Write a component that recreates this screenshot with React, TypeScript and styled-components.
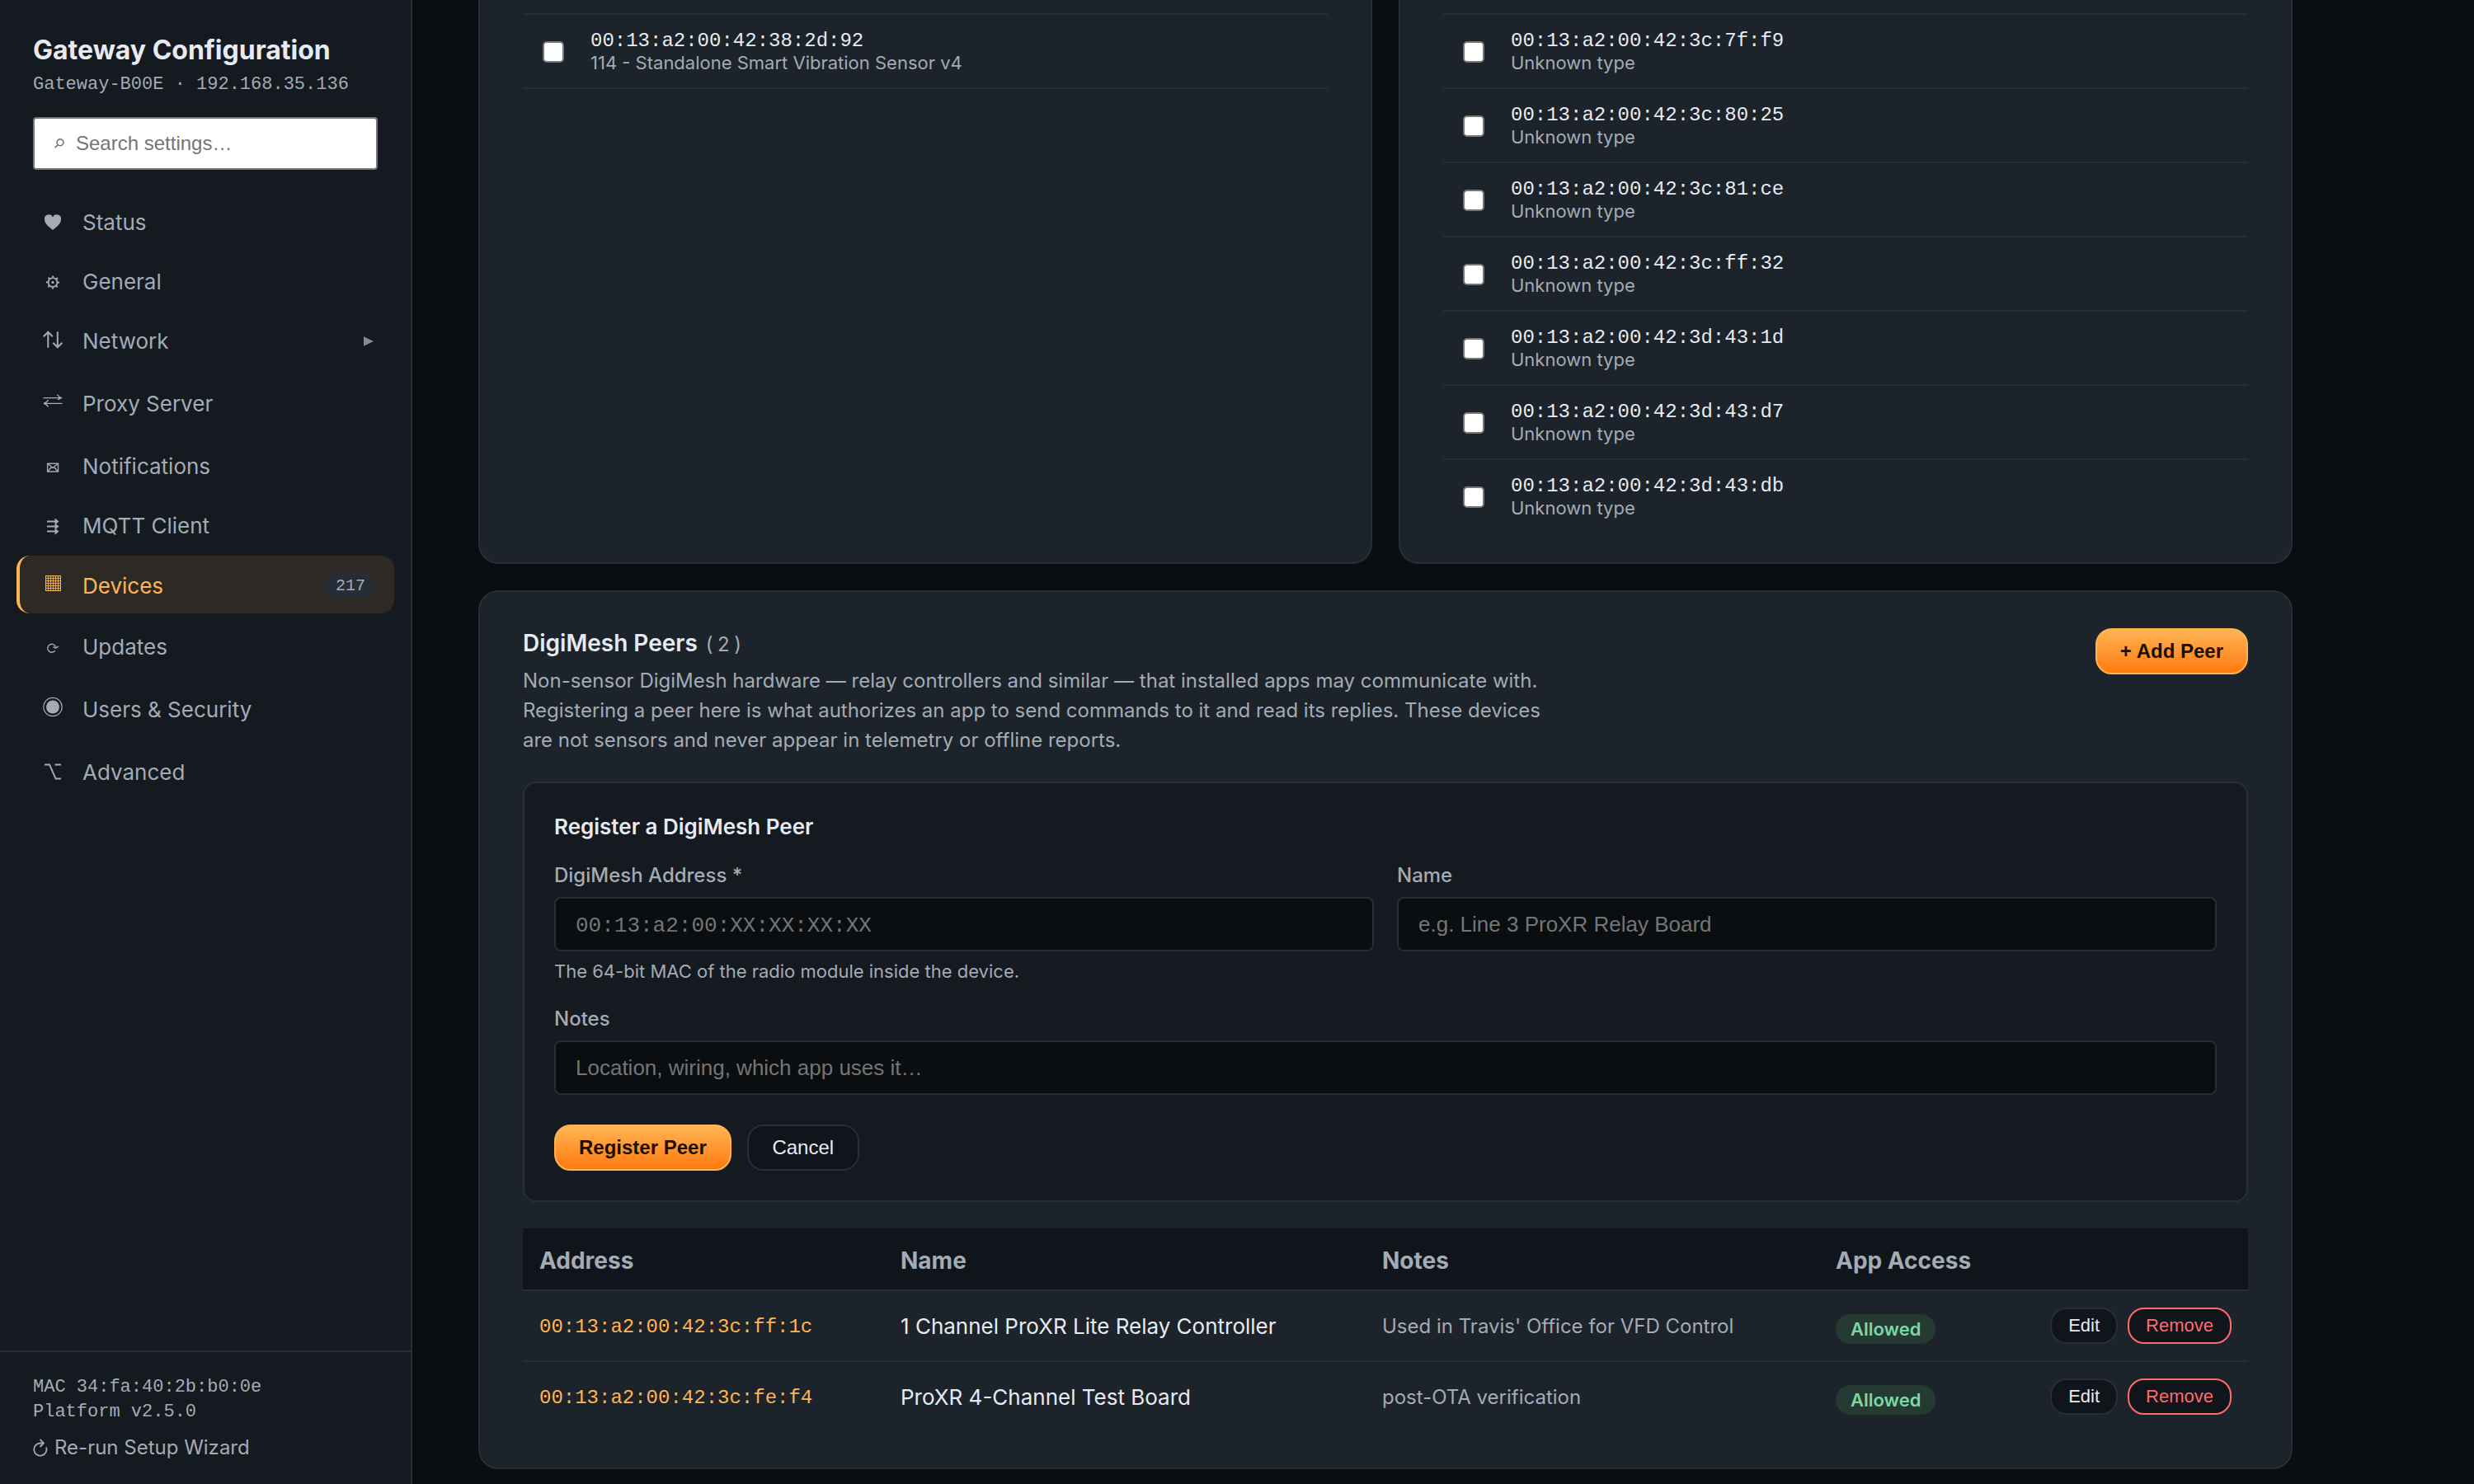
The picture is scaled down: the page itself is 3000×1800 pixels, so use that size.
import React from "react";
import styled, { createGlobalStyle, css } from "styled-components";

const sans = `Inter, "Liberation Sans", sans-serif`;
const arial = `"Liberation Sans", Arial, sans-serif`;
const mono = `"Liberation Mono", "Courier New", monospace`;

const c = {
  page: "#0a0e10",
  side: "#151920",
  card: "#1c232a",
  deep: "#10141b",
  line: "#262e36",
  text: "#e6eaf2",
  muted: "#a3abb5",
  accent: "#ffb454",
  danger: "#ff6b6b",
};

const Global = createGlobalStyle`
  * { box-sizing: border-box; }
  body { margin: 0; background: ${c.page}; color: ${c.text}; font-family: ${sans}; overflow: hidden; }
`;

const Page = styled.div`
  display: flex;
  width: 3000px;
  height: 1800px;
  overflow: hidden;
`;

const Sidebar = styled.aside`
  display: flex;
  flex-direction: column;
  width: 500px;
  height: 1800px;
  flex: none;
  background: ${c.side};
  border-right: 2px solid ${c.line};
`;

const SideHead = styled.header`
  padding: 41px 40px 0;
`;

const Title = styled.h1`
  margin: 0;
  font-size: 32px;
  line-height: 40px;
  font-weight: 700;
  white-space: nowrap;
`;

const SubTitle = styled.div`
  margin-top: 7px;
  font: 22px/30px ${mono};
  color: ${c.muted};
  white-space: nowrap;
`;

const Search = styled.label`
  display: flex;
  align-items: center;
  gap: 14px;
  height: 64px;
  margin-top: 24px;
  padding-left: 24px;
  background: #fff;
  border: 2px solid #767676;
  border-radius: 4px;
  color: #757575;
`;

const SearchInput = styled.input`
  flex: 1;
  min-width: 0;
  padding: 0;
  border: 0;
  outline: 0;
  background: none;
  font: 24px ${arial};
  &::placeholder { color: #757575; opacity: 1; }
`;

const Nav = styled.nav`
  display: flex;
  flex-direction: column;
  gap: 4px;
  padding: 28px 20px 0;
`;

const NavItem = styled.a<{ $h: number; $active?: boolean }>`
  display: flex;
  align-items: center;
  height: ${(p) => p.$h}px;
  padding: 0 24px 0 28px;
  border-left: 4px solid transparent;
  border-radius: 16px;
  color: ${c.muted};
  font-size: 26px;
  ${(p) =>
    p.$active &&
    css`
      color: ${c.accent};
      background: #2d2a25;
      border-left-color: ${c.accent};
    `}
`;

const NavIcon = styled.svg`
  width: 24px;
  height: 32px;
  flex: none;
  margin: 0 24px 2px 0;
  overflow: visible;
`;

const NavLabel = styled.span`
  flex: 1;
  padding-top: 3px;
  line-height: 36px;
`;

const Chevron = styled.svg`
  width: 12px;
  height: 12px;
  margin: 3px 1px 0 0;
  color: #858d97;
`;

const Count = styled.span`
  height: 28px;
  padding: 0 11px 0 13px;
  border-radius: 14px;
  background: #262d36;
  color: ${c.muted};
  font: 20px/31px ${mono};
`;

const SideFoot = styled.footer`
  height: 162px;
  margin-top: auto;
  padding: 28px 40px 0;
  border-top: 2px solid ${c.line};
  color: ${c.muted};
  font: 22px/30px ${mono};
`;

const Rerun = styled.a`
  display: flex;
  align-items: center;
  gap: 8px;
  margin-top: 10px;
  font: 24px/36px ${sans};
`;

const Main = styled.main`
  width: 2200px;
  margin-left: 80px;
`;

const Columns = styled.div`
  display: grid;
  grid-template-columns: 1fr 1fr;
  gap: 32px;
  height: 714px;
  margin-top: -30px;
`;

const Card = styled.section`
  background: ${c.card};
  border: 2px solid ${c.line};
  border-radius: 24px;
  padding: 44px 52px 34px;
`;

const DeviceRow = styled.label`
  display: flex;
  align-items: center;
  height: 90px;
  padding-left: 24px;
  border-top: 2px solid ${c.line};
`;

const DeviceList = styled.div<{ $closed?: boolean }>`
  border-bottom: ${(p) => (p.$closed ? `2px solid ${c.line}` : "0")};
`;

const Check = styled.input.attrs({ type: "checkbox" })`
  appearance: none;
  width: 26px;
  height: 26px;
  margin: 2px 32px 0 0;
  background: #fff;
  border: 2px solid #767676;
  border-radius: 5px;
`;

const Mac = styled.div`
  margin-bottom: -2px;
  padding-top: 2px;
  font: 24px/28px ${mono};
  color: ${c.text};
`;

const Kind = styled.div`
  font-size: 22px;
  line-height: 28px;
  color: ${c.muted};
`;

const PeersCard = styled(Card)`
  height: 1066px;
  margin-top: 32px;
`;

const PeersHead = styled.div`
  display: flex;
  justify-content: space-between;
  align-items: flex-start;
`;

const PeersTitle = styled.h2`
  margin: 0;
  font-size: 28px;
  line-height: 36px;
  font-weight: 600;
`;

const PeersCount = styled.span`
  margin-left: 10px;
  font-size: 24px;
  font-weight: 400;
  letter-spacing: 5.5px;
  color: ${c.muted};
`;

const Desc = styled.p`
  width: 1260px;
  margin: 8px 0 0;
  font-size: 24px;
  line-height: 36px;
  color: ${c.muted};
`;

const Button = styled.button<{ $kind?: "primary" | "danger"; $small?: boolean }>`
  height: ${(p) => (p.$small ? 44 : 56)}px;
  padding: 0 ${(p) => (p.$small ? 20 : 28)}px;
  border: 2px solid ${c.line};
  border-radius: 20px;
  background: ${c.deep};
  color: ${c.text};
  font: ${(p) => (p.$small ? 22 : 24)}px ${arial};
  white-space: nowrap;
  ${(p) =>
    p.$kind === "primary" &&
    css`
      background: linear-gradient(180deg, #ffb454, #ff7a0f);
      border-color: ${c.accent};
      color: #1a0f00;
      font-weight: 700;
    `}
  ${(p) =>
    p.$kind === "danger" &&
    css`
      border-color: ${c.danger};
      color: ${c.danger};
    `}
`;

const Form = styled.form`
  height: 510px;
  margin-top: 32px;
  padding: 35px 36px 36px;
  background: ${c.side};
  border: 2px solid ${c.line};
  border-radius: 16px;
`;

const FormTitle = styled.h3`
  margin: 0 0 23px;
  font-size: 26px;
  line-height: 36px;
  font-weight: 600;
`;

const FormGrid = styled.div`
  display: grid;
  grid-template-columns: 1fr 1fr;
  column-gap: 28px;
`;

const Field = styled.label`
  display: block;
`;

const FieldLabel = styled.div`
  margin-bottom: 8px;
  font-size: 24px;
  line-height: 36px;
  font-weight: 500;
  color: ${c.muted};
`;

const Input = styled.input<{ $mono?: boolean }>`
  display: block;
  width: 100%;
  height: 66px;
  padding: ${(p) => (p.$mono ? 3 : 0)}px 24px 0;
  background: ${c.page};
  border: 2px solid ${c.line};
  border-radius: 8px;
  outline: 0;
  font: 26px ${(p) => (p.$mono ? mono : arial)};
  &::placeholder { color: #757575; opacity: 1; }
`;

const Hint = styled.div`
  margin: 8px 0 24px;
  font-size: 22px;
  line-height: 32px;
  color: ${c.muted};
`;

const Actions = styled.div`
  display: flex;
  gap: 19px;
  margin-top: 36px;
`;

const CancelButton = styled(Button)`
  width: 136px;
`;

const Table = styled.div`
  margin-top: 32px;
`;

const columns = css`
  display: grid;
  grid-template-columns: 438px 584px 550px 1fr;
  align-items: center;
  padding: 0 20px;
`;

const HeadRow = styled.div`
  ${columns}
  height: 76px;
  padding-top: 3px;
  background: ${c.deep};
  border-bottom: 2px solid ${c.line};
  color: ${c.muted};
  font-size: 28px;
  font-weight: 700;
`;

const PeerRow = styled.div`
  ${columns}
  height: 86px;
  border-bottom: 2px solid ${c.line};
  &:last-child { border-bottom-color: transparent; }
`;

const Address = styled.span`
  padding-top: 4px;
  font: 24px/30px ${mono};
  color: ${c.accent};
`;

const Name = styled.span`
  font-size: 26px;
`;

const Notes = styled.span`
  font-size: 24px;
  color: ${c.muted};
`;

const Access = styled.div`
  display: flex;
  align-items: center;
  gap: 12px;
`;

const Allowed = styled.span`
  height: 36px;
  margin: 8px auto 0 0;
  padding: 0 18px;
  border-radius: 18px;
  background: #243a33;
  color: #7bd8a2;
  font-size: 22px;
  line-height: 36px;
  font-weight: 600;
`;

const line = { fill: "none", stroke: "currentColor", strokeWidth: 2 } as const;

const icons: Record<string, React.ReactNode> = {
  Status: <path fill="currentColor" d="M12 28C7 24 2 20 2 15.200A5.200 5.200 0 0 1 12 12.600 5.200 5.200 0 0 1 22 15.200C22 20 17 24 12 28Z" />,
  General: (
    <g {...line}>
      <circle cx="12" cy="19.500" r="5.400" strokeWidth="1.800" />
      <circle cx="12" cy="19.500" r="1.200" fill="currentColor" strokeWidth="1" />
      <circle cx="12" cy="19.500" r="7" strokeWidth="2" strokeDasharray="2.200 3.298" strokeDashoffset="1.100" />
    </g>
  ),
  Network: <path {...line} d="M6.300 26.800V8.200M.8 13.200 6.300 7.700 11.800 13.200M17.800 7.200V25.800M12.300 20.800 17.800 26.300 23.300 20.800" />,
  Proxy: <path {...line} strokeWidth="1.300" d="M.5 11.700H23M17.500 7.500C18.500 9.500 20 11 23 11.700 20.500 12.300 19 13 18.200 14M23.500 18.300H1M6.500 14C5.500 16 4 17.600 1 18.300 4 19 5.500 20.500 6.500 22.500" />,
  Notifications: <path {...line} strokeWidth="1.400" d="M5.600 15.200H18.500V25H5.600ZM5.600 15.200 12 20.600 18.500 15.200M5.600 25 10.500 19.500M18.500 25 13.500 19.500M9.500 20H14.500" />,
  MQTT: (
    <g fill="currentColor">
      <path d="M5 12.600H16V14.600H5ZM5 18.600H16V20.600H5ZM5 24.600H16V26.600H5Z" />
      <path d="M14.500 9.500 19.500 13.600 14.500 17.700ZM14.500 15.500 19.500 19.600 14.500 23.700ZM14.500 21.500 19.500 25.600 14.500 29.700Z" />
    </g>
  ),
  Devices: (
    <g {...line} strokeWidth="1">
      <rect x="3.500" y="6.500" width="18" height="18" fill="currentColor" fillOpacity=".12" />
      <path opacity=".8" d="M6.500 6.500V24.500M9.500 6.500V24.500M12.500 6.500V24.500M15.500 6.500V24.500M18.500 6.500V24.500M3.500 9.500H21.500M3.500 12.500H21.500M3.500 15.500H21.500M3.500 18.500H21.500M3.500 21.500H21.500" />
    </g>
  ),
  Updates: <path {...line} strokeWidth="1.400" d="M14.800 22.200A5 5 0 1 1 15.600 17.800M12.500 17.600 15.600 19.200 19 16.800" />,
  Users: (
    <g>
      <circle cx="12" cy="14.500" r="11.200" {...line} strokeWidth="1.200" />
      <circle cx="12" cy="14.500" r="8" fill="currentColor" />
    </g>
  ),
  Advanced: <path {...line} d="M2 8.400H8L15.600 25.600H22M14.500 8.400H22" />,
};

const nav = [
  { icon: "Status", label: "Status", h: 68 },
  { icon: "General", label: "General", h: 68 },
  { icon: "Network", label: "Network", h: 68, chevron: true },
  { icon: "Proxy", label: "Proxy Server", h: 76 },
  { icon: "Notifications", label: "Notifications", h: 68 },
  { icon: "MQTT", label: "MQTT Client", h: 68 },
  { icon: "Devices", label: "Devices", h: 70, count: 217 },
  { icon: "Updates", label: "Updates", h: 71 },
  { icon: "Users", label: "Users & Security", h: 73 },
  { icon: "Advanced", label: "Advanced", h: 71 },
];

const unknown = ["7f:f9", "80:25", "81:ce", "ff:32"].map((s) => `00:13:a2:00:42:3c:${s}`)
  .concat(["43:1d", "43:d7", "43:db"].map((s) => `00:13:a2:00:42:3d:${s}`));

const peers = [
  { mac: "00:13:a2:00:42:3c:ff:1c", name: "1 Channel ProXR Lite Relay Controller", notes: "Used in Travis' Office for VFD Control" },
  { mac: "00:13:a2:00:42:3c:fe:f4", name: "ProXR 4-Channel Test Board", notes: "post-OTA verification" },
];

function Device({ mac, kind }: { mac: string; kind: string }) {
  return (
    <DeviceRow>
      <Check />
      <div>
        <Mac>{mac}</Mac>
        <Kind>{kind}</Kind>
      </div>
    </DeviceRow>
  );
}

export default function App() {
  return (
    <Page>
      <Global />
      <Sidebar>
        <SideHead>
          <Title>Gateway Configuration</Title>
          <SubTitle>Gateway-B00E · 192.168.35.136</SubTitle>
          <Search>
            <svg width="12" height="12" viewBox="0 0 12 12" fill="none" stroke="currentColor" strokeWidth="1.600">
              <circle cx="7" cy="4.800" r="3.900" />
              <path d="M4.200 7.600.6 11.200" />
            </svg>
            <SearchInput placeholder="Search settings…" />
          </Search>
        </SideHead>
        <Nav>
          {nav.map((n) => (
            <NavItem key={n.label} $h={n.h} $active={!!n.count}>
              <NavIcon viewBox="0 0 24 32">{icons[n.icon]}</NavIcon>
              <NavLabel>{n.label}</NavLabel>
              {n.chevron && (
                <Chevron viewBox="0 0 12 12">
                  <path d="M0 .3 12 6 0 11.700Z" fill="currentColor" />
                </Chevron>
              )}
              {n.count && <Count>{n.count}</Count>}
            </NavItem>
          ))}
        </Nav>
        <SideFoot>
          <div>MAC 34:fa:40:2b:b0:0e</div>
          <div>Platform v2.5.0</div>
          <Rerun>
            <svg width="18" height="24" viewBox="0 0 18 24" fill="none" stroke="currentColor" strokeWidth="1.800">
              <path d="M12.500 6.500H8.800A7.600 7.600 0 1 0 16 11.500M8.500 1.800 13 6.400 8.500 11" />
            </svg>
            Re-run Setup Wizard
          </Rerun>
        </SideFoot>
      </Sidebar>
      <Main>
        <Columns>
          <Card>
            <DeviceList $closed>
              <Device mac="00:13:a2:00:42:38:2d:92" kind="114 - Standalone Smart Vibration Sensor v4" />
            </DeviceList>
          </Card>
          <Card>
            <DeviceList>
              {unknown.map((m) => (
                <Device key={m} mac={m} kind="Unknown type" />
              ))}
            </DeviceList>
          </Card>
        </Columns>
        <PeersCard>
          <PeersHead>
            <div>
              <PeersTitle>
                DigiMesh Peers<PeersCount>(2)</PeersCount>
              </PeersTitle>
              <Desc>
                Non-sensor DigiMesh hardware — relay controllers and similar — that installed apps may communicate
                with. Registering a peer here is what authorizes an app to send commands to it and read its replies.
                These devices are not sensors and never appear in telemetry or offline reports.
              </Desc>
            </div>
            <Button $kind="primary">+ Add Peer</Button>
          </PeersHead>
          <Form>
            <FormTitle>Register a DigiMesh Peer</FormTitle>
            <FormGrid>
              <Field>
                <FieldLabel>DigiMesh Address *</FieldLabel>
                <Input $mono placeholder="00:13:a2:00:XX:XX:XX:XX" />
                <Hint>The 64-bit MAC of the radio module inside the device.</Hint>
              </Field>
              <Field>
                <FieldLabel>Name</FieldLabel>
                <Input placeholder="e.g. Line 3 ProXR Relay Board" />
              </Field>
            </FormGrid>
            <Field>
              <FieldLabel>Notes</FieldLabel>
              <Input placeholder="Location, wiring, which app uses it…" />
            </Field>
            <Actions>
              <Button type="button" $kind="primary">Register Peer</Button>
              <CancelButton type="button">Cancel</CancelButton>
            </Actions>
          </Form>
          <Table>
            <HeadRow>
              <span>Address</span>
              <span>Name</span>
              <span>Notes</span>
              <span>App Access</span>
            </HeadRow>
            {peers.map((p) => (
              <PeerRow key={p.mac}>
                <Address>{p.mac}</Address>
                <Name>{p.name}</Name>
                <Notes>{p.notes}</Notes>
                <Access>
                  <Allowed>Allowed</Allowed>
                  <Button $small>Edit</Button>
                  <Button $small $kind="danger">Remove</Button>
                </Access>
              </PeerRow>
            ))}
          </Table>
        </PeersCard>
      </Main>
    </Page>
  );
}
